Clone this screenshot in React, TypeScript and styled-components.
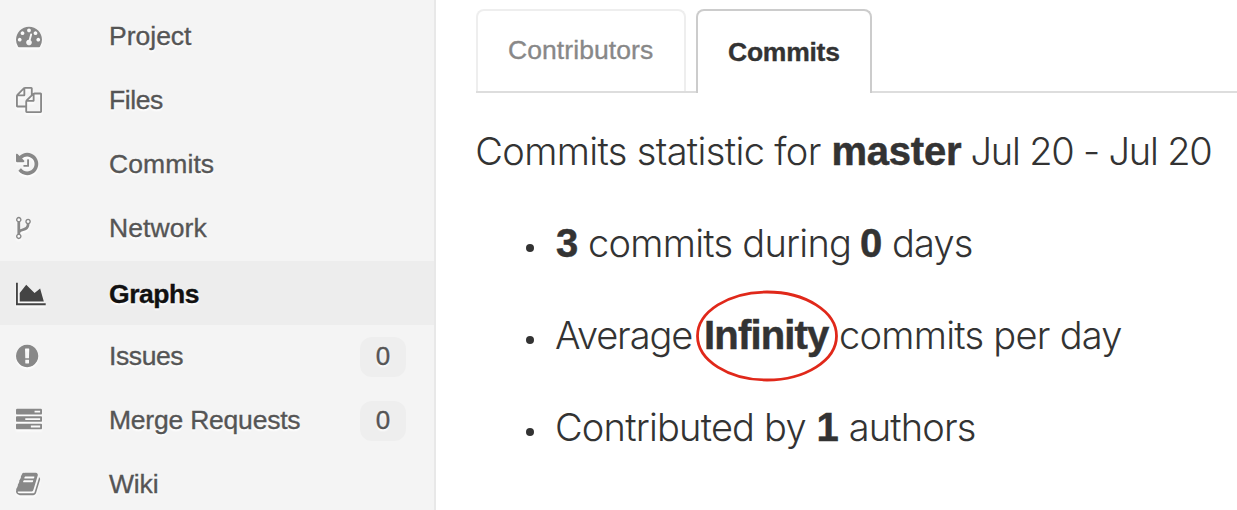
import React from 'react';
import styled, { createGlobalStyle, css } from 'styled-components';

const GlobalStyle = createGlobalStyle`
  html, body { margin: 0; padding: 0; background: #fff; }
  * { box-sizing: border-box; }
`;

const Page = styled.div`
  display: flex;
  width: 1237px;
  height: 510px;
  overflow: hidden;
  background: #fff;
  font-family: 'Liberation Sans', Arial, sans-serif;
  color: #333;
`;

const Sidebar = styled.nav`
  flex: none;
  width: 436px;
  height: 510px;
  padding-top: 5px;
  overflow: hidden;
  background: #f4f4f4;
  border-right: 2px solid #e8e8e8;
`;

const NavItem = styled.a<{ $active?: boolean }>`
  display: flex;
  align-items: center;
  height: 64px;
  padding: 0 28px 2px 16px;
  font-size: 26.5px;
  color: #555;
  text-shadow: 0 2px 2px #fff;
  -webkit-text-stroke: 0.35px currentColor;
  ${p => p.$active && css`
    padding-top: 2px;
    padding-bottom: 0;
    background: #ededed;
    color: #111;
    font-weight: bold;
  `}
`;

const IconSlot = styled.span<{ $active?: boolean }>`
  display: flex;
  flex: none;
  width: 93px;
  color: ${p => (p.$active ? '#444' : '#888')};
  svg {
    display: block;
    height: 26px;
    overflow: visible;
    filter: drop-shadow(0 2px 1px #fff);
  }
`;

const NavLabel = styled.span<{ $spacing: number }>`
  flex: 1;
  line-height: 40px;
  letter-spacing: ${p => p.$spacing}px;
`;

const Count = styled.span`
  width: 46px;
  height: 40px;
  margin-top: 2px;
  border-radius: 12px;
  background: #eee;
  font-size: 26px;
  line-height: 38px;
  text-align: center;
`;

const Main = styled.main`
  flex: 1;
  min-width: 0;
  padding: 9px 0 0 40px;
`;

const Tabs = styled.div`
  display: flex;
  gap: 10px;
  height: 84px;
  border-bottom: 2px solid #ddd;
`;

const Tab = styled.a<{ $active?: boolean }>`
  height: 82px;
  width: 210px;
  padding-left: 30px;
  border: 2px solid #eee;
  border-bottom: 0;
  border-radius: 8px 8px 0 0;
  font-size: 26.5px;
  line-height: 79px;
  letter-spacing: 0.08px;
  color: #888;
  background: #fff;
  -webkit-text-stroke: 0.35px currentColor;
  ${p => p.$active && css`
    width: 176px;
    height: 84px;
    border-color: #ccc;
    color: #333;
    font-weight: bold;
    line-height: 82px;
    letter-spacing: -0.25px;
  `}
`;

const Summary = styled.div`
  padding-top: 12px;
  font-family: Inter, 'Liberation Sans', sans-serif;
  font-size: 38px;
  font-weight: 300;
  line-height: 92px;
  white-space: nowrap;
`;

const Title = styled.h3`
  margin: 0;
  font: inherit;
`;

const List = styled.ul`
  margin: 0;
  padding: 0 0 0 79px;
  list-style: none;
`;

const Item = styled.li`
  height: 92px;
  &::before {
    content: '';
    float: left;
    width: 8px;
    height: 8px;
    margin: 47px 0 0 -29px;
    border-radius: 50%;
    background: #333;
  }
`;

const Phrase = styled.span<{ $spacing: number; $shift?: number }>`
  letter-spacing: ${p => p.$spacing}px;
  margin-left: ${p => p.$shift ?? 0}px;
`;

const Value = styled.strong<{ $spacing?: number; $shift?: number }>`
  position: relative;
  font-family: 'Liberation Sans', Arial, sans-serif;
  font-size: 40px;
  font-weight: bold;
  line-height: 1;
  letter-spacing: ${p => p.$spacing ?? 0}px;
  margin-left: ${p => p.$shift ?? 0}px;
  -webkit-text-stroke: 0.5px currentColor;
`;

const Circle = styled.svg`
  position: absolute;
  left: -8px;
  top: -23px;
  width: 142px;
  height: 92px;
`;

const icons = {
  dashboard: {
    x: 0, w: 1792,
    d: 'M384 1152q0-53-37.5-90.5t-90.5-37.5-90.5 37.5-37.5 90.5 37.5 90.5 90.5 37.5 90.5-37.5 37.5-90.5zm192-448q0-53-37.5-90.5t-90.5-37.5-90.5 37.5-37.5 90.5 37.5 90.5 90.5 37.5 90.5-37.5 37.5-90.5zm428 481l101-382q6-26-7.5-48.5t-38.5-29.5-48 6.5-30 39.5l-101 382q-60 5-107 43.5t-63 98.5q-20 77 20 146t117 89 146-20 89-117q16-60-6-117t-72-91zm660-33q0-53-37.5-90.5t-90.5-37.5-90.5 37.5-37.5 90.5 37.5 90.5 90.5 37.5 90.5-37.5 37.5-90.5zm-640-640q0-53-37.5-90.5t-90.5-37.5-90.5 37.5-37.5 90.5 37.5 90.5 90.5 37.5 90.5-37.5 37.5-90.5zm448 192q0-53-37.5-90.5t-90.5-37.5-90.5 37.5-37.5 90.5 37.5 90.5 90.5 37.5 90.5-37.5 37.5-90.5zm320 448q0 261-141 483-19 29-54 29h-1402q-35 0-54-29-141-221-141-483 0-182 71-348t191-286 286-191 348-71 348 71 286 191 191 286 71 348z',
  },
  files: {
    x: 0, w: 1792,
    d: 'M1696 384q40 0 68 28t28 68v1216q0 40-28 68t-68 28h-960q-40 0-68-28t-28-68v-288h-544q-40 0-68-28t-28-68v-672q0-40 20-88t48-76l408-408q28-28 76-48t88-20h416q40 0 68 28t28 68v328q68-40 128-40h416zm-544 213l-299 299h299v-299zm-640-384l-299 299h299v-299zm196 647l316-316v-416h-384v416q0 40-28 68t-68 28h-416v640h512v-256q0-40 20-88t48-76zm956 804v-1152h-384v416q0 40-28 68t-68 28h-416v640h896z',
  },
  history: {
    x: 128, w: 1536,
    d: 'M1664 896q0 156-61 298t-164 245-245 164-298 61q-172 0-327-72.5t-264-204.5q-7-10-6.5-22.5t8.5-20.5l137-138q10-9 25-9 16 2 23 12 73 95 179 147t225 52q104 0 198.5-40.5t163.5-109.5 109.5-163.5 40.5-198.5-40.5-198.5-109.5-163.5-163.5-109.5-198.5-40.5q-98 0-188 35.5t-160 101.5l137 138q31 30 14 69-17 40-59 40h-448q-26 0-45-19t-19-45v-448q0-42 40-59 39-17 69 14l130 129q107-101 244.5-156.5t284.5-55.5q156 0 298 61t245 164 164 245 61 298zm-640-288v448q0 14-9 23t-23 9h-320q-14 0-23-9t-9-23v-64q0-14 9-23t23-9h224v-352q0-14 9-23t23-9h64q14 0 23 9t9 23z',
  },
  network: {
    x: 384, w: 1024,
    d: 'M672 1472q0-40-28-68t-68-28-68 28-28 68 28 68 68 28 68-28 28-68zm0-1152q0-40-28-68t-68-28-68 28-28 68 28 68 68 28 68-28 28-68zm640 128q0-40-28-68t-68-28-68 28-28 68 28 68 68 28 68-28 28-68zm96 0q0 52-26 96.5t-70 69.5q-2 287-226 414-67 38-203 81-128 40-169.5 71t-41.5 100v26q44 25 70 69.5t26 96.5q0 80-56 136t-136 56-136-56-56-136q0-52 26-96.5t70-69.5v-820q-44-25-70-69.5t-26-96.5q0-80 56-136t136-56 136 56 56 136q0 52-26 96.5t-70 69.5v497q54-26 154-57 55-17 87.5-29.5t70.5-31 59-39.5 40.5-51 28-69.5 8.5-91.5q-44-25-70-69.5t-26-96.5q0-80 56-136t136-56 136 56 56 136z',
  },
  graphs: {
    x: 0, w: 2048,
    d: 'M2048 1536v128h-2048v-1536h128v1408h1920zm-384-1024l256 896h-1664v-576l448-576 576 576z',
  },
  issues: {
    x: 128, w: 1536,
    d: 'M896 128q209 0 385.5 103t279.5 279.5 103 385.5-103 385.5-279.5 279.5-385.5 103-385.5-103-279.5-279.5-103-385.5 103-385.5 279.5-279.5 385.5-103zm128 1247v-190q0-14-9-23.5t-22-9.5h-192q-13 0-23 10t-10 23v190q0 13 10 23t23 10h192q13 0 22-9.5t9-23.5zm-2-344l18-621q0-12-10-18-10-8-24-8h-220q-14 0-24 8-10 6-10 18l17 621q0 10 10 17.5t24 7.5h185q14 0 23.5-7.5t10.5-17.5z',
  },
  merge: {
    x: 0, w: 1792,
    d: 'M1024 1408h640v-128h-640v128zm-384-512h1024v-128h-1024v128zm640-512h384v-128h-384v128zm512 832v256q0 26-19 45t-45 19h-1664q-26 0-45-19t-19-45v-256q0-26 19-45t45-19h1664q26 0 45 19t19 45zm0-512v256q0 26-19 45t-45 19h-1664q-26 0-45-19t-19-45v-256q0-26 19-45t45-19h1664q26 0 45 19t19 45zm0-512v256q0 26-19 45t-45 19h-1664q-26 0-45-19t-19-45v-256q0-26 19-45t45-19h1664q26 0 45 19t19 45z',
  },
  wiki: {
    x: 64, w: 1664,
    d: 'M1703 478q40 57 18 129l-275 906q-19 64-76.5 107.5t-122.5 43.5h-923q-77 0-148.5-53.5t-99.5-131.5q-24-67-2-127 0-4 3-27t4-37q1-8-3-21.5t-3-19.5q2-11 8-21t16.5-23.5 16.5-23.5q23-38 45-91.5t30-91.5q3-10 .5-30t-.5-28q3-11 17-28t17-23q21-36 42-92t25-90q1-9-2.5-32t.5-28q4-13 22-30.5t22-22.5q19-26 42.5-84.5t27.5-96.5q1-8-3-25.5t-2-26.5q2-8 9-18t18-23 17-21q8-12 16.5-30.5t15-35 16-36 19.5-32 26.5-23.5 36-11.5 47.5 5.5l-1 3q38-9 51-9h761q74 0 114 56t18 130l-274 906q-36 119-71.5 153.5t-128.5 34.5h-869q-27 0-38 15-11 16-1 43 24 70 144 70h923q29 0 56-15.5t35-41.5l300-987q7-22 5-57 38 15 59 43zm-1064 2q-4 13 2 22.5t20 9.5h608q13 0 25.5-9.5t16.5-22.5l21-64q4-13-2-22.5t-20-9.5h-608q-13 0-25.5 9.5t-16.5 22.5zm-83 256q-4 13 2 22.5t20 9.5h608q13 0 25.5-9.5t16.5-22.5l21-64q4-13-2-22.5t-20-9.5h-608q-13 0-25.5 9.5t-16.5 22.5z',
  },
};

type IconName = keyof typeof icons;

function Icon({ name }: { name: IconName }) {
  const { x, w, d } = icons[name];
  return (
    <svg viewBox={`${x} 0 ${w} 1792`} width={(w * 26) / 1792} height={26} fill="currentColor" aria-hidden>
      <path d={d} />
    </svg>
  );
}

const navigation: { icon: IconName; label: string; spacing: number; active?: boolean; count?: number }[] = [
  { icon: 'dashboard', label: 'Project', spacing: 0 },
  { icon: 'files', label: 'Files', spacing: -0.4 },
  { icon: 'history', label: 'Commits', spacing: 0.1 },
  { icon: 'network', label: 'Network', spacing: 0.1 },
  { icon: 'graphs', label: 'Graphs', spacing: -0.45, active: true },
  { icon: 'issues', label: 'Issues', spacing: -0.4, count: 0 },
  { icon: 'merge', label: 'Merge Requests', spacing: -0.22, count: 0 },
  { icon: 'wiki', label: 'Wiki', spacing: -0.15 },
];

export default function App() {
  return (
    <Page>
      <GlobalStyle />
      <Sidebar>
        {navigation.map(item => (
          <NavItem key={item.label} $active={item.active}>
            <IconSlot $active={item.active}><Icon name={item.icon} /></IconSlot>
            <NavLabel $spacing={item.spacing}>{item.label}</NavLabel>
            {item.count !== undefined && <Count>{item.count}</Count>}
          </NavItem>
        ))}
      </Sidebar>
      <Main>
        <Tabs>
          <Tab>Contributors</Tab>
          <Tab $active>Commits</Tab>
        </Tabs>
        <Summary>
          <Title>
            <Phrase $spacing={-0.65} $shift={-0.7}>Commits statistic for</Phrase>{' '}
            <Value $spacing={-0.2}>master</Value>{' '}
            <Phrase $spacing={-1.2} $shift={-1.6}>Jul 20 - Jul 20</Phrase>
          </Title>
          <List>
            <Item>
              <Value $shift={1}>3</Value>{' '}
              <Phrase $spacing={-0.75} $shift={-0.9}>commits during</Phrase>{' '}
              <Value $shift={-2}>0</Value>{' '}
              <Phrase $spacing={-0.8} $shift={-0.9}>days</Phrase>
            </Item>
            <Item>
              <Phrase $spacing={-1.1}>Average</Phrase>{' '}
              <Value $spacing={-0.85} $shift={1.2}>
                Infinity
                <Circle viewBox="0 0 142 92" fill="none" stroke="#e0281a" strokeWidth="2.8">
                  <ellipse cx="71" cy="46" rx="69.5" ry="44" />
                </Circle>
              </Value>{' '}
              <Phrase $spacing={-0.74} $shift={0}>commits per day</Phrase>
            </Item>
            <Item>
              <Phrase $spacing={-0.8}>Contributed by</Phrase>{' '}
              <Value $shift={0}>1</Value>{' '}
              <Phrase $spacing={-0.85} $shift={-0.6}>authors</Phrase>
            </Item>
          </List>
        </Summary>
      </Main>
    </Page>
  );
}
